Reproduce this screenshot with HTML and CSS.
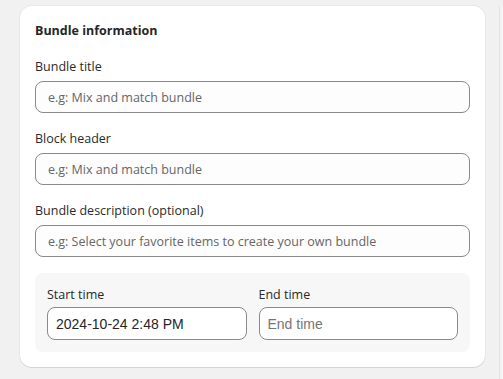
FILE: index.html
```html
<!DOCTYPE html>
<html lang="en">
<head>
  <meta charset="UTF-8">
  <meta name="viewport" content="width=device-width, initial-scale=1.0">
  <title>Bundle information</title>
  <link rel="stylesheet" href="styles.css">
</head>
<body>
  <div class="layout">
    <div class="card">
      <h2 class="card-title">Bundle information</h2>

      <div class="field">
        <label for="bundle-title">Bundle title</label>
        <input id="bundle-title" type="text" placeholder="e.g: Mix and match bundle">
      </div>

      <div class="field">
        <label for="block-header">Block header</label>
        <input id="block-header" type="text" placeholder="e.g: Mix and match bundle">
      </div>

      <div class="field">
        <label for="bundle-desc">Bundle description (optional)</label>
        <input id="bundle-desc" type="text" placeholder="e.g: Select your favorite items to create your own bundle">
      </div>

      <div class="time-box">
        <div class="time-field">
          <label for="start-time">Start time</label>
          <input id="start-time" class="time-input" type="text" value="2024-10-24 2:48 PM">
        </div>
        <div class="time-field">
          <label for="end-time">End time</label>
          <input id="end-time" class="time-input" type="text" placeholder="End time">
        </div>
      </div>
    </div>

    <div class="side-panel"></div>
  </div>
</body>
</html>
```

FILE: styles.css
```css
body {
  margin: 0;
  background-color: #f1f1f1;
  font-family: "Open Sans", "Noto Sans", sans-serif;
  color: #303030;
  overflow: hidden;
  height: 100vh;
}

.layout {
  display: flex;
  align-items: flex-start;
  padding: 6px 0 0 20px;
  gap: 14px;
}

.card {
  flex-shrink: 0;
  width: 465px;
  box-sizing: border-box;
  background-color: #fff;
  border-radius: 12px;
  padding: 15px;
  box-shadow: 0 1px 0 rgba(0,0,0,0.08), 0 0 0 1px rgba(0,0,0,0.04);
  display: flex;
  flex-direction: column;
  gap: 16px;
}

.card-title {
  margin: 0;
  font-size: 12.5px;
  font-weight: 700;
  line-height: 20px;
  color: #262626;
}

.field {
  display: flex;
  flex-direction: column;
  gap: 4px;
}

.field label,
.time-field label {
  font-size: 12.5px;
  line-height: 20px;
  color: #2a2a2a;
}

.field input {
  height: 32px;
  box-sizing: border-box;
  border: 1px solid #8a8a8a;
  border-radius: 8px;
  background-color: #fdfdfd;
  padding: 0 12px;
  font-family: "Open Sans", "Noto Sans", sans-serif;
  font-size: 12.5px;
  color: #303030;
}

.field input::placeholder {
  color: #666;
}

.time-box {
  background-color: #f7f7f7;
  border-radius: 8px;
  padding: 12px;
  display: grid;
  grid-template-columns: 1fr 1fr;
  gap: 12px;
}

.time-field {
  display: flex;
  flex-direction: column;
  gap: 2px;
}

.time-input {
  height: 33px;
  box-sizing: border-box;
  border: 1px solid #8a8a8a;
  border-radius: 8px;
  background-color: #fff;
  padding: 0 8px;
  font-family: "Liberation Sans", Arial, sans-serif;
  font-size: 14px;
  color: #262626;
  width: 100%;
}

.time-input::placeholder {
  color: #757575;
}

.side-panel {
  flex-shrink: 0;
  width: 3px;
  height: 373px;
  background-color: #f3f3f3;
  border-left: 1px solid #e3e3e3;
}
```
